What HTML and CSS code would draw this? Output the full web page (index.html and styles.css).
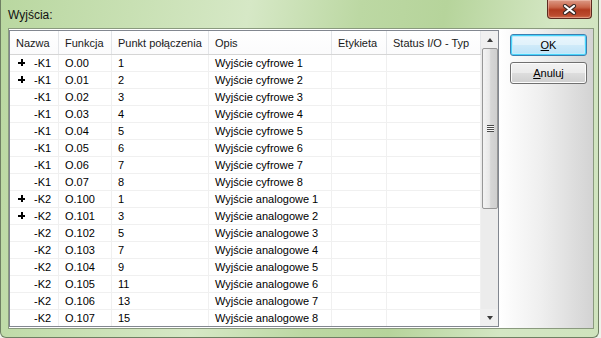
FILE: index.html
```html
<!DOCTYPE html>
<html lang="pl">
<head>
<meta charset="utf-8">
<title>Wyjścia</title>
<link rel="stylesheet" href="styles.css">
</head>
<body>
<div class="window">
  <div class="titlebar">
    <span class="title">Wyjścia:</span>
    <div class="close">
      <svg width="15" height="11" viewBox="0 0 15 11">
        <path d="M3 2 L12 9 M12 2 L3 9" stroke="#3a2a26" stroke-width="4.2" stroke-linecap="round" fill="none"/>
        <path d="M3 2 L12 9 M12 2 L3 9" stroke="#ffffff" stroke-width="2.2" stroke-linecap="round" fill="none"/>
      </svg>
    </div>
  </div>
  <div class="client">
    <div class="list">
      <div class="table">
        <div class="row head">
          <div class="cell c1">Nazwa</div>
          <div class="cell c2">Funkcja</div>
          <div class="cell c3">Punkt połączenia</div>
          <div class="cell c4">Opis</div>
          <div class="cell c5">Etykieta</div>
          <div class="cell c6">Status I/O - Typ</div>
        </div>
        <div class="row"><div class="cell c1"><span class="plus"></span>-K1</div><div class="cell c2">O.00</div><div class="cell c3">1</div><div class="cell c4">Wyjście cyfrowe 1</div><div class="cell c5"></div><div class="cell c6"></div></div>
        <div class="row"><div class="cell c1"><span class="plus"></span>-K1</div><div class="cell c2">O.01</div><div class="cell c3">2</div><div class="cell c4">Wyjście cyfrowe 2</div><div class="cell c5"></div><div class="cell c6"></div></div>
        <div class="row"><div class="cell c1"><span class="noplus"></span>-K1</div><div class="cell c2">O.02</div><div class="cell c3">3</div><div class="cell c4">Wyjście cyfrowe 3</div><div class="cell c5"></div><div class="cell c6"></div></div>
        <div class="row"><div class="cell c1"><span class="noplus"></span>-K1</div><div class="cell c2">O.03</div><div class="cell c3">4</div><div class="cell c4">Wyjście cyfrowe 4</div><div class="cell c5"></div><div class="cell c6"></div></div>
        <div class="row"><div class="cell c1"><span class="noplus"></span>-K1</div><div class="cell c2">O.04</div><div class="cell c3">5</div><div class="cell c4">Wyjście cyfrowe 5</div><div class="cell c5"></div><div class="cell c6"></div></div>
        <div class="row"><div class="cell c1"><span class="noplus"></span>-K1</div><div class="cell c2">O.05</div><div class="cell c3">6</div><div class="cell c4">Wyjście cyfrowe 6</div><div class="cell c5"></div><div class="cell c6"></div></div>
        <div class="row"><div class="cell c1"><span class="noplus"></span>-K1</div><div class="cell c2">O.06</div><div class="cell c3">7</div><div class="cell c4">Wyjście cyfrowe 7</div><div class="cell c5"></div><div class="cell c6"></div></div>
        <div class="row"><div class="cell c1"><span class="noplus"></span>-K1</div><div class="cell c2">O.07</div><div class="cell c3">8</div><div class="cell c4">Wyjście cyfrowe 8</div><div class="cell c5"></div><div class="cell c6"></div></div>
        <div class="row"><div class="cell c1"><span class="plus"></span>-K2</div><div class="cell c2">O.100</div><div class="cell c3">1</div><div class="cell c4">Wyjście analogowe 1</div><div class="cell c5"></div><div class="cell c6"></div></div>
        <div class="row"><div class="cell c1"><span class="plus"></span>-K2</div><div class="cell c2">O.101</div><div class="cell c3">3</div><div class="cell c4">Wyjście analogowe 2</div><div class="cell c5"></div><div class="cell c6"></div></div>
        <div class="row"><div class="cell c1"><span class="noplus"></span>-K2</div><div class="cell c2">O.102</div><div class="cell c3">5</div><div class="cell c4">Wyjście analogowe 3</div><div class="cell c5"></div><div class="cell c6"></div></div>
        <div class="row"><div class="cell c1"><span class="noplus"></span>-K2</div><div class="cell c2">O.103</div><div class="cell c3">7</div><div class="cell c4">Wyjście analogowe 4</div><div class="cell c5"></div><div class="cell c6"></div></div>
        <div class="row"><div class="cell c1"><span class="noplus"></span>-K2</div><div class="cell c2">O.104</div><div class="cell c3">9</div><div class="cell c4">Wyjście analogowe 5</div><div class="cell c5"></div><div class="cell c6"></div></div>
        <div class="row"><div class="cell c1"><span class="noplus"></span>-K2</div><div class="cell c2">O.105</div><div class="cell c3">11</div><div class="cell c4">Wyjście analogowe 6</div><div class="cell c5"></div><div class="cell c6"></div></div>
        <div class="row"><div class="cell c1"><span class="noplus"></span>-K2</div><div class="cell c2">O.106</div><div class="cell c3">13</div><div class="cell c4">Wyjście analogowe 7</div><div class="cell c5"></div><div class="cell c6"></div></div>
        <div class="row"><div class="cell c1"><span class="noplus"></span>-K2</div><div class="cell c2">O.107</div><div class="cell c3">15</div><div class="cell c4">Wyjście analogowe 8</div><div class="cell c5"></div><div class="cell c6"></div></div>
      </div>
      <div class="scrollbar">
        <div class="sb-btn"><span class="arrow-up"></span></div>
        <div class="thumb"><span class="grip"></span></div>
        <div class="track"></div>
        <div class="sb-btn"><span class="arrow-down"></span></div>
      </div>
    </div>
    <div class="buttons">
      <button class="btn default"><u>O</u>K</button>
      <button class="btn"><u>A</u>nuluj</button>
    </div>
  </div>
</div>
</body>
</html>
```
FILE: styles.css
```css
html, body {
  margin: 0;
  padding: 0;
}
body {
  width: 601px;
  height: 338px;
  overflow: hidden;
  background: #eef2ea;
  font-family: "Liberation Sans", Arial, sans-serif;
  font-size: 11px;
  color: #000;
}
.window {
  width: 599px;
  height: 338px;
  box-sizing: border-box;
  border: 1px solid #6f7f63;
  border-top: none;
  border-radius: 0 0 6px 6px;
  background:
    linear-gradient(100deg, #b9d7a0 0%, #c8e0b3 20%, #d6e8c6 38%, #bcd8a3 55%, #b6d49b 68%, #d4e7c4 85%, #cfe3bd 100%);
  display: flex;
  flex-direction: column;
}
.titlebar {
  height: 28px;
  display: flex;
  align-items: flex-start;
  justify-content: space-between;
  padding-left: 7px;
  padding-right: 6px;
}
.title {
  font-size: 12px;
  color: #111;
  margin-top: 8px;
}
.close {
  width: 45px;
  height: 19px;
  box-sizing: border-box;
  border: 1px solid #5b2a1f;
  border-top: none;
  border-radius: 0 0 4px 4px;
  background: linear-gradient(#dc9a86 0%, #c9654a 40%, #b03a1f 55%, #bb4a2e 85%, #d0704f 100%);
  box-shadow: inset 0 0 0 1px rgba(255,220,210,0.4);
  display: flex;
  align-items: center;
  justify-content: center;
}
.close svg {
  display: block;
}
.client {
  margin: 0 0 0 7px;
  width: 586px;
  height: 301px;
  box-sizing: border-box;
  border: 1px solid #8a9a7e;
  background: linear-gradient(to right, #ffffff 84%, #efefef 91%, #d3d3d3 100%);
  display: flex;
  align-items: flex-start;
}
.list {
  margin-top: 1px;
  width: 490px;
  height: 297px;
  box-sizing: border-box;
  border: 1px solid #828790;
  background: #fff;
  display: flex;
}
.table {
  width: 471px;
  height: 295px;
  overflow: hidden;
}
.row {
  display: flex;
  height: 17px;
  box-sizing: border-box;
  border-bottom: 1px solid #f0f0f0;
}
.row.head {
  height: 24px;
  border-bottom: 1px solid #d5d5d5;
  background: linear-gradient(#ffffff, #fbfbfc);
  color: #1a1a1a;
}
.cell {
  box-sizing: border-box;
  padding-left: 6px;
  display: flex;
  align-items: center;
  white-space: nowrap;
  overflow: hidden;
  border-right: 1px solid #f0f0f0;
}
.head .cell {
  border-right: 1px solid #e3e5e8;
  padding-left: 6px;
}
.c1 { width: 49px; padding-left: 8px; }
.head .c1 { padding-left: 6px; }
.c2 { width: 53px; }
.c3 { width: 97px; }
.c4 { width: 123px; }
.c5 { width: 55px; }
.c6 { width: 94px; }
.plus, .noplus {
  width: 16px;
  height: 9px;
  flex: none;
  position: relative;
}
.plus::before, .plus::after {
  content: "";
  position: absolute;
  background: #000;
}
.plus::before {
  left: 0;
  top: 3px;
  width: 7px;
  height: 2px;
}
.plus::after {
  left: 2.5px;
  top: 0.5px;
  width: 2px;
  height: 7px;
}
.scrollbar {
  width: 17px;
  height: 295px;
  background: #eaeaea;
  display: flex;
  flex-direction: column;
}
.sb-btn {
  height: 17px;
  flex: none;
  display: flex;
  align-items: center;
  justify-content: center;
  background: #f0f0f0;
}
.arrow-up {
  width: 0;
  height: 0;
  border-left: 3.5px solid transparent;
  border-right: 3.5px solid transparent;
  border-bottom: 4px solid #3c3c3c;
}
.arrow-down {
  width: 0;
  height: 0;
  border-left: 3.5px solid transparent;
  border-right: 3.5px solid transparent;
  border-top: 4px solid #3c3c3c;
}
.thumb {
  height: 161px;
  flex: none;
  margin: 0 0 0 1px;
  box-sizing: border-box;
  border: 1px solid #979797;
  border-radius: 2px;
  background: linear-gradient(to right, #f3f3f3 0%, #e8e8e8 45%, #d6d6d6 55%, #cfcfcf 100%);
  display: flex;
  align-items: center;
  justify-content: center;
}
.grip {
  width: 7px;
  height: 7px;
  background: repeating-linear-gradient(#4a4a4a 0 1px, #f8f8f8 1px 2px);
}
.track {
  flex: 1;
  background: #ececec;
}
.buttons {
  margin: 5px 0 0 11px;
  display: flex;
  flex-direction: column;
  gap: 6px;
}
.btn {
  width: 77px;
  height: 22px;
  box-sizing: border-box;
  border: 1px solid #707070;
  border-radius: 3px;
  background: linear-gradient(#f2f2f2 0%, #ebebeb 48%, #dddddd 52%, #cfcfcf 100%);
  box-shadow: inset 0 0 0 1px #fcfcfc;
  font-family: "Liberation Sans", Arial, sans-serif;
  font-size: 11px;
  color: #000;
  padding: 0;
}
.btn.default {
  border-color: #3c7fb1;
  box-shadow: inset 0 0 0 1px #48d4fb, inset 0 0 0 2px #c0ecfc;
  background: linear-gradient(#eaf6fd 0%, #e1f2fb 48%, #cfeaf9 52%, #bde3f8 100%);
}
.btn u {
  text-decoration: underline;
}
```
